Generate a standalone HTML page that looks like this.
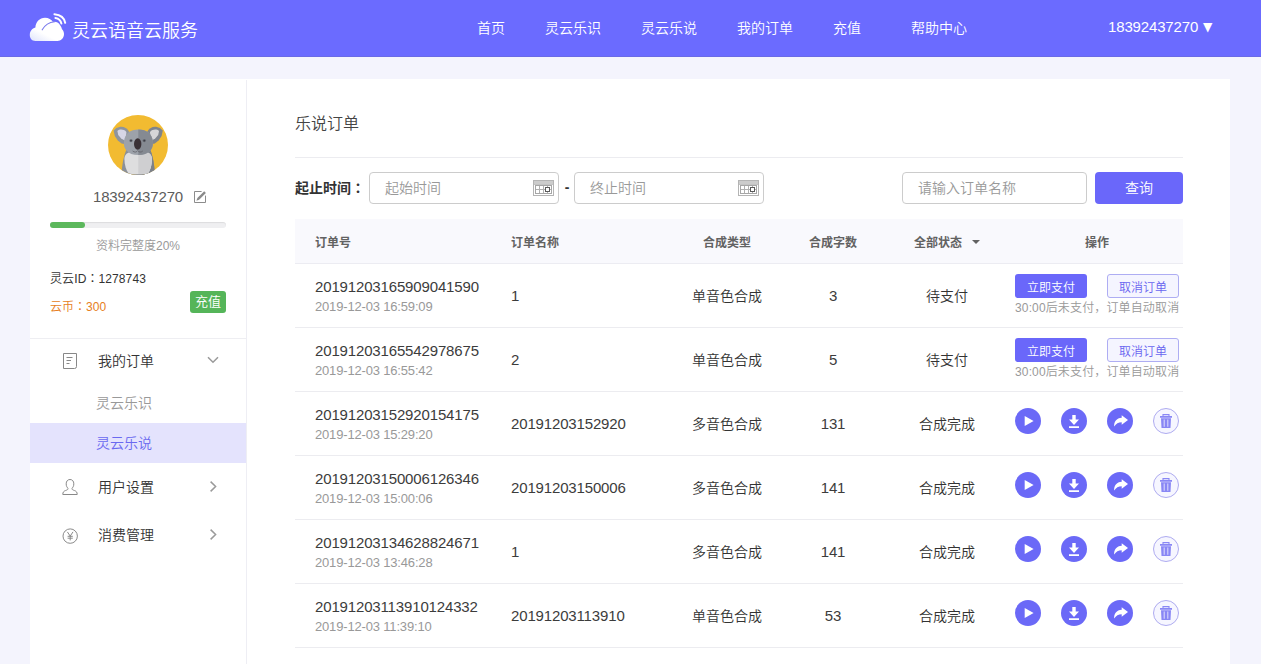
<!DOCTYPE html>
<html lang="zh-CN">
<head>
<meta charset="utf-8">
<title>灵云语音云服务 - 乐说订单</title>
<style>
*{box-sizing:border-box;margin:0;padding:0}
html,body{width:1261px;height:664px;overflow:hidden}
body{background:#f4f4fd;font-family:"Liberation Sans","Noto Sans CJK SC",sans-serif;font-size:14px;color:#333;position:relative;font-weight:350}
ul{list-style:none}
/* header */
.hd{position:absolute;left:0;top:0;width:1261px;height:56px;background:#6b6bff;color:#fff;box-shadow:0 1px 0 #6a6ae6}
.logo{position:absolute;left:29px;top:11px;width:38px;height:32px}
.brand{position:absolute;left:72px;top:18px;font-size:18px;line-height:26px;white-space:nowrap;color:#fff}
.nav a{position:absolute;top:17px;font-size:14px;line-height:22px;color:#fff;white-space:nowrap;text-decoration:none}
.user{position:absolute;left:1108px;top:16px;font-size:15px;line-height:22px;white-space:nowrap;letter-spacing:-.15px}
.user span{position:absolute;left:94px;top:1px;font-family:"DejaVu Sans","Noto Sans CJK SC",sans-serif;font-size:11.5px;line-height:22px;letter-spacing:0;transform:scaleX(.86)}
/* container */
.wrap{position:absolute;left:30px;top:79px;width:1200px;height:601px;background:#fff}
.side{position:absolute;left:0;top:1px;width:217px;height:600px;border-right:1px solid #eeeef4}
.main{position:absolute;left:217px;top:1px;width:983px;height:600px}
/* sidebar */
.avatar{position:absolute;left:78px;top:35px;width:60px;height:60px}
.phone{position:absolute;left:0;top:106px;width:216px;text-align:center;font-size:15px;line-height:22px;color:#5c5c5c;letter-spacing:-.15px;padding-right:23px;padding-left:23px}
.edit{position:absolute;left:163px;top:110px;width:14px;height:14px}
.prog{position:absolute;left:20px;top:142px;width:176px;height:6px;border-radius:3px;background:#efeff1;box-shadow:inset 0 1px 1px rgba(0,0,0,.08)}
.prog b{display:block;width:35px;height:6px;border-radius:3px;background:#5cb85c}
.pct{position:absolute;left:0;top:157px;width:216px;text-align:center;font-size:12px;line-height:18px;color:#999}
.lyid{position:absolute;left:20px;top:189px;letter-spacing:.1px;font-size:12px;line-height:18px;color:#333;white-space:nowrap}
.coin{position:absolute;left:20px;top:217px;font-size:12px;line-height:18px;color:#e67e22;white-space:nowrap}
.charge{position:absolute;left:160px;top:211px;width:36px;height:22px;border-radius:3px;background:#55b559;color:#fff;font-size:13px;line-height:22px;text-align:center}
.sline{position:absolute;left:0;top:258px;width:216px;height:1px;background:#eeeef2}
.menu{position:absolute;left:0;top:259px;width:216px}
.menu .t{position:relative;height:48px;line-height:48px;font-size:14px;color:#333;padding-left:68px}
.menu .t.first{height:44px;line-height:44px}
.menu .t svg.ic{position:absolute;left:31px;top:50%;margin-top:-9px;width:18px;height:18px}
.menu .t svg.ar{position:absolute;left:176px;top:50%;margin-top:-8px;width:14px;height:14px}
.menu .s{height:40px;line-height:40px;font-size:14px;color:#999;padding-left:66px}
.menu .s.on{background:#e4e3fd;color:#6a69f0}
/* main */
.title{position:absolute;left:48px;top:32px;font-size:16px;line-height:24px;color:#444}
.hr{position:absolute;left:48px;top:77px;width:888px;height:1px;background:#ececf0}
.flabel{position:absolute;left:48px;top:96px;font-size:14px;line-height:22px;font-weight:bold;color:#333;white-space:nowrap}
.inp{position:absolute;top:92px;height:32px;border:1px solid #ccc;border-radius:4px;background:#fff;font-size:14px;line-height:30px;color:#999;padding-left:15px;white-space:nowrap}
.inp svg{position:absolute;right:4px;top:7px;width:21px;height:16px}
.dash{position:absolute;left:316px;top:96px;width:8px;text-align:center;font-weight:bold;font-size:14px;line-height:22px;color:#333}
.btn{position:absolute;left:848px;top:92px;width:88px;height:32px;border-radius:4px;background:#6a67fa;color:#fff;font-size:14px;line-height:32px;text-align:center}
/* table */
.th{position:absolute;left:48px;top:139px;width:888px;height:45px;background:#f9f9fd;border-bottom:1px solid #ececf2;font-size:12px;font-weight:bold;color:#626262}
.th span{position:absolute;top:14px;line-height:20px;white-space:nowrap}
.c{transform:translateX(-50%)}
.cl{font-family:"Noto Sans CJK JP","Noto Sans CJK SC",sans-serif}
.row{position:absolute;left:48px;width:888px;height:64px;border-bottom:1px solid #ececf0}
.row span{position:absolute;white-space:nowrap}
.oid{left:20px;top:12px;font-size:15px;line-height:22px;color:#3c3c3c;letter-spacing:-.15px}
.odt{left:20px;top:34px;font-size:13px;line-height:18px;color:#999;letter-spacing:-.17px}
.onm{left:216px;top:21px;font-size:15px;line-height:22px;color:#3c3c3c;letter-spacing:-.15px}
.oty{left:432px;top:21px;font-size:14px;line-height:22px;color:#333}
.ocn{left:538px;top:21px;font-size:15px;line-height:22px;color:#3c3c3c;letter-spacing:-.15px}
.ost{left:652px;top:21px;font-size:14px;line-height:22px;color:#333}
.pay{left:720px;top:10px;width:72px;height:24px;border-radius:3px;background:#6a67fa;color:#fff;font-size:12px;line-height:28px;text-align:center}
.cancel{left:812px;top:10px;width:72px;height:24px;border-radius:3px;background:#f5f5ff;border:1px solid #aeadf3;color:#6864f0;font-size:12px;line-height:26px;text-align:center}
.hint{left:720px;top:35px;font-size:12px;line-height:18px;color:#999;letter-spacing:.14px}
.ico{position:absolute;top:16px;width:26px;height:26px}
</style>
</head>
<body>
<div class="hd">
  <svg class="logo" viewBox="0 0 38 32"><defs><linearGradient id="cg" x1="0" y1="1" x2=".6" y2=".2"><stop offset="0" stop-color="#dfe4fb"/><stop offset=".5" stop-color="#ffffff"/><stop offset="1" stop-color="#ffffff"/></linearGradient></defs>
    <path d="M6.4 30 C2.8 30 .8 27.2 .8 24 C.8 20.4 3 17.6 6.4 16.6 C6.6 11 10.6 6.7 16 6.7 C19.6 6.7 22.4 8.4 24 10.9 C27 10.4 29.4 11.6 31 14 C32 15.4 32.6 16.8 33 18.2 C34.4 19.4 35 21.2 35 23 C35 27 32 30 28.4 30 Z" fill="url(#cg)"/>
    <path d="M13.2 18.8 C15.6 14.6 19.6 11.4 25.6 10.8" fill="none" stroke="#7a7aec" stroke-width="1.1" stroke-linecap="round"/>
    <path d="M26.4 7 C29.6 7.6 31.8 9.6 32.4 12.6" fill="none" stroke="#fff" stroke-width="2" stroke-linecap="round"/>
    <path d="M25.4 3.2 C31.4 3.8 35.4 7.2 36.2 11.8" fill="none" stroke="#fff" stroke-width="2" stroke-linecap="round"/></svg>
  <div class="brand">灵云语音云服务</div>
  <div class="nav">
    <a style="left:477px">首页</a>
    <a style="left:545px">灵云乐识</a>
    <a style="left:641px">灵云乐说</a>
    <a style="left:737px">我的订单</a>
    <a style="left:833px">充值</a>
    <a style="left:911px">帮助中心</a>
  </div>
  <div class="user">18392437270<span>▼</span></div>
</div>

<div class="wrap">
  <div class="side">
    <svg class="avatar" viewBox="0 0 60 60"><defs><clipPath id="kc"><circle cx="30" cy="30" r="30"/></clipPath><clipPath id="kr"><rect x="30.3" y="0" width="30" height="60"/></clipPath></defs>
      <circle cx="30" cy="30" r="30" fill="#f2bb31"/>
      <g clip-path="url(#kc)">
        <path d="M19 33 C15.5 41 13.6 51 13.6 61 H46.8 C46.8 51 45 41 41.6 33 Z" fill="#8b9098"/>
        <path d="M19 33 C15.5 41 13.6 51 13.6 61 H46.8 C46.8 51 45 41 41.6 33 Z" fill="#7c8189" clip-path="url(#kr)"/>
        <path d="M16.4 44 C16.4 38 22 36 30.3 36 C38.6 36 44 38 44 44 C44 50 42.4 55 40 58.6 C37 59.6 23.6 59.6 20.6 58.6 C18.2 55 16.4 50 16.4 44 Z" fill="#dededf"/>
        <path d="M16.4 44 C16.4 38 22 36 30.3 36 C38.6 36 44 38 44 44 C44 50 42.4 55 40 58.6 C37 59.6 23.6 59.6 20.6 58.6 C18.2 55 16.4 50 16.4 44 Z" fill="#cfcfd1" clip-path="url(#kr)"/>
        <path d="M5.6 15.4 L8.4 13 L12.2 11.8 C16 11.4 19.8 13.4 21.2 17 L21.8 24 L18.8 29.6 L13.6 28.6 L9.8 25.6 L6.8 21 Z" fill="#8e949c"/>
        <path d="M54.8 15.4 L52 13 L48.2 11.8 C44.4 11.4 40.6 13.4 39.2 17 L38.6 24 L41.6 29.6 L46.8 28.6 L50.6 25.6 L53.6 21 Z" fill="#7f848c"/>
        <path d="M9.4 16 C11.6 13.8 16 14.2 18.4 17 L17.6 26 L13.2 23.6 L10.2 20 Z" fill="#d6d6e6"/>
        <path d="M51 16 C48.8 13.8 44.4 14.2 42 17 L42.8 26 L47.2 23.6 L50.2 20 Z" fill="#d6d6d8"/>
        <path d="M30.4 14.6 C22 14.6 17 19 16 26 C15 33.6 19.2 40 30.4 40 C41.6 40 45.8 33.6 44.8 26 C43.8 19 38.8 14.6 30.4 14.6 Z" fill="#9da2aa"/>
        <path d="M30.4 14.6 C22 14.6 17 19 16 26 C15 33.6 19.2 40 30.4 40 C41.6 40 45.8 33.6 44.8 26 C43.8 19 38.8 14.6 30.4 14.6 Z" fill="#858a92" clip-path="url(#kr)"/>
        <ellipse cx="29.7" cy="29" rx="3.7" ry="5.8" fill="#3a3136"/>
        <circle cx="23" cy="25.6" r="1.7" fill="#71757d"/><circle cx="23" cy="25.6" r=".9" fill="#3d3d45"/>
        <circle cx="36.3" cy="25.6" r="1.7" fill="#676b73"/><circle cx="36.3" cy="25.6" r=".9" fill="#3d3d45"/>
        <path d="M24.6 36 C26.4 37.6 28.6 37.4 29.7 35.6 C30.8 37.4 33 37.6 34.8 36" fill="none" stroke="#5a5a62" stroke-width=".7"/>
      </g></svg>
    <div class="phone">18392437270</div>
    <svg class="edit" viewBox="0 0 14 14"><path d="M8.6 1.5 H1.5 V12.5 H12.5 V5.6" fill="none" stroke="#8c8c8c" stroke-width="1"/><path d="M3.4 10.7 L4.4 8 L11.2 1.2 L12.9 2.9 L6.1 9.7 Z" fill="#8a8a8a"/></svg>
    <div class="prog"><b></b></div>
    <div class="pct">资料完整度20%</div>
    <div class="lyid">灵云ID<span class="cl" lang="ja">：</span>1278743</div>
    <div class="coin">云币<span class="cl" lang="ja">：</span>300</div>
    <div class="charge">充值</div>
    <div class="sline"></div>
    <ul class="menu">
      <li class="t first"><svg class="ic" viewBox="0 0 18 18"><path d="M2.5 1.5 H15.5 V14.5 Q15.5 16.5 13.5 16.5 H2.5 Z" fill="none" stroke="#888" stroke-width="1"/><path d="M5.5 5.5 H11.5 M5.5 8.5 H10 M5.5 11.5 H8.5" stroke="#888" stroke-width="1"/></svg>我的订单<svg class="ar" viewBox="0 0 14 14"><path d="M2 4.2 L7 9.3 L12 4.2" fill="none" stroke="#9a9a9a" stroke-width="1.5"/></svg></li>
      <li class="s">灵云乐识</li>
      <li class="s on">灵云乐说</li>
      <li class="t"><svg class="ic" viewBox="0 0 18 18"><path d="M9 1.5 C11.4 1.5 12.8 3.3 12.8 5.8 C12.8 8 12 9.6 10.9 10.4 C10.9 11.6 12 12 13.6 12.6 C15.4 13.3 16.2 14.2 16.2 16.5 H1.8 C1.8 14.2 2.6 13.3 4.4 12.6 C6 12 7.1 11.6 7.1 10.4 C6 9.6 5.2 8 5.2 5.8 C5.2 3.3 6.6 1.5 9 1.5 Z" fill="none" stroke="#888" stroke-width="1"/></svg>用户设置<svg class="ar" viewBox="0 0 14 14"><path d="M4.6 2.6 L9.6 7.5 L4.6 12.4" fill="none" stroke="#9a9a9a" stroke-width="1.5"/></svg></li>
      <li class="t"><svg class="ic" viewBox="0 0 18 18"><circle cx="9.2" cy="10.1" r="7.2" fill="none" stroke="#8a8a8a" stroke-width="1"/><path d="M6.4 5.9 L9.2 10.1 L12 5.9 M9.2 10.1 V14.4 M6.6 10.3 H11.8 M6.6 12.2 H11.8" fill="none" stroke="#8a8a8a" stroke-width="1"/></svg>消费管理<svg class="ar" viewBox="0 0 14 14"><path d="M4.6 2.6 L9.6 7.5 L4.6 12.4" fill="none" stroke="#9a9a9a" stroke-width="1.5"/></svg></li>
    </ul>
  </div>
  <div class="main">
    <div class="title">乐说订单</div>
    <div class="hr"></div>
    <div class="flabel">起止时间<span class="cl" lang="ja">：</span></div>
    <div class="inp" style="left:122px;width:190px">起始时间<svg viewBox="0 0 21 16" shape-rendering="crispEdges"><rect x=".5" y=".5" width="20" height="15" fill="#fff" stroke="#b4b4b4"/><rect x="1" y="1" width="19" height="3" fill="#ccc"/><path d="M1 4.5 H20" stroke="#c4c4c4"/><rect x="2.5" y="5.5" width="16" height="8" fill="#fff" stroke="#a6a6a6"/><path d="M6.5 6 V13 M10.5 6 V13 M14.5 6 V13 M3 9.5 H18" stroke="#b0b0b0"/><rect x="12.5" y="7.5" width="4" height="4" fill="#fff" stroke="#5a5a5a"/></svg></div>
    <div class="dash">-</div>
    <div class="inp" style="left:327px;width:190px">终止时间<svg viewBox="0 0 21 16" shape-rendering="crispEdges"><rect x=".5" y=".5" width="20" height="15" fill="#fff" stroke="#b4b4b4"/><rect x="1" y="1" width="19" height="3" fill="#ccc"/><path d="M1 4.5 H20" stroke="#c4c4c4"/><rect x="2.5" y="5.5" width="16" height="8" fill="#fff" stroke="#a6a6a6"/><path d="M6.5 6 V13 M10.5 6 V13 M14.5 6 V13 M3 9.5 H18" stroke="#b0b0b0"/><rect x="12.5" y="7.5" width="4" height="4" fill="#fff" stroke="#5a5a5a"/></svg></div>
    <div class="inp" style="left:655px;width:185px">请输入订单名称</div>
    <div class="btn">查询</div>

    <div class="th">
      <span style="left:20px">订单号</span>
      <span style="left:216px">订单名称</span>
      <span class="c" style="left:432px">合成类型</span>
      <span class="c" style="left:538px">合成字数</span>
      <span class="c" style="left:643px">全部状态</span><i style="position:absolute;left:677px;top:21px;border-left:4px solid transparent;border-right:4px solid transparent;border-top:4px solid #626262"></i>
      <span class="c" style="left:802px">操作</span>
    </div>
    <div class="row" style="top:184px">
      <span class="oid">20191203165909041590</span><span class="odt">2019-12-03 16:59:09</span>
      <span class="onm">1</span><span class="oty c">单音色合成</span><span class="ocn c">3</span><span class="ost c">待支付</span>
      <span class="pay">立即支付</span><span class="cancel">取消订单</span><span class="hint">30:00后未支付，订单自动取消</span>
    </div>
    <div class="row" style="top:248px">
      <span class="oid">20191203165542978675</span><span class="odt">2019-12-03 16:55:42</span>
      <span class="onm">2</span><span class="oty c">单音色合成</span><span class="ocn c">5</span><span class="ost c">待支付</span>
      <span class="pay">立即支付</span><span class="cancel">取消订单</span><span class="hint">30:00后未支付，订单自动取消</span>
    </div>
    <div class="row" style="top:312px">
      <span class="oid">20191203152920154175</span><span class="odt">2019-12-03 15:29:20</span>
      <span class="onm">20191203152920</span><span class="oty c">多音色合成</span><span class="ocn c">131</span><span class="ost c">合成完成</span>
      <svg class="ico" style="left:720px" viewBox="0 0 26 26"><circle cx="13" cy="13" r="13" fill="#6b69f7"/><path d="M9.7 8.1 L18.6 13 L9.7 17.9 Z" fill="#fff"/></svg><svg class="ico" style="left:766px" viewBox="0 0 26 26"><circle cx="13" cy="13" r="13" fill="#6b69f7"/><path d="M11.3 7 h3.4 v4.6 h3.3 L13 17 L8 11.6 h3.3 Z M8 18.3 h10 v1.6 h-10 Z" fill="#fff"/></svg><svg class="ico" style="left:812px" viewBox="0 0 26 26"><circle cx="13" cy="13" r="13" fill="#6b69f7"/><path d="M14.7 7.2 L21 12 L14.7 16.8 V14.2 C11.4 14.2 9 15.6 7.2 18.6 C6.7 13.8 9.6 9.9 14.7 9.7 Z" fill="#fff"/></svg><svg class="ico" style="left:858px" viewBox="0 0 26 26"><circle cx="13" cy="13" r="12.5" fill="#f6f6ff" stroke="#aeabf0" stroke-width="1"/><path d="M7 7.9 h12 v1.9 h-12 Z M8 10.3 h10 l-.5 9.6 h-9 Z" fill="#8987f5"/><path d="M10 8 V6.6 H16 V8" fill="none" stroke="#8987f5" stroke-width="1.1"/><path d="M11.2 11.4 v7.3 M14.8 11.4 v7.3" stroke="#d9d8fc" stroke-width="1.1"/></svg>
    </div>
    <div class="row" style="top:376px">
      <span class="oid">20191203150006126346</span><span class="odt">2019-12-03 15:00:06</span>
      <span class="onm">20191203150006</span><span class="oty c">多音色合成</span><span class="ocn c">141</span><span class="ost c">合成完成</span>
      <svg class="ico" style="left:720px" viewBox="0 0 26 26"><circle cx="13" cy="13" r="13" fill="#6b69f7"/><path d="M9.7 8.1 L18.6 13 L9.7 17.9 Z" fill="#fff"/></svg><svg class="ico" style="left:766px" viewBox="0 0 26 26"><circle cx="13" cy="13" r="13" fill="#6b69f7"/><path d="M11.3 7 h3.4 v4.6 h3.3 L13 17 L8 11.6 h3.3 Z M8 18.3 h10 v1.6 h-10 Z" fill="#fff"/></svg><svg class="ico" style="left:812px" viewBox="0 0 26 26"><circle cx="13" cy="13" r="13" fill="#6b69f7"/><path d="M14.7 7.2 L21 12 L14.7 16.8 V14.2 C11.4 14.2 9 15.6 7.2 18.6 C6.7 13.8 9.6 9.9 14.7 9.7 Z" fill="#fff"/></svg><svg class="ico" style="left:858px" viewBox="0 0 26 26"><circle cx="13" cy="13" r="12.5" fill="#f6f6ff" stroke="#aeabf0" stroke-width="1"/><path d="M7 7.9 h12 v1.9 h-12 Z M8 10.3 h10 l-.5 9.6 h-9 Z" fill="#8987f5"/><path d="M10 8 V6.6 H16 V8" fill="none" stroke="#8987f5" stroke-width="1.1"/><path d="M11.2 11.4 v7.3 M14.8 11.4 v7.3" stroke="#d9d8fc" stroke-width="1.1"/></svg>
    </div>
    <div class="row" style="top:440px">
      <span class="oid">20191203134628824671</span><span class="odt">2019-12-03 13:46:28</span>
      <span class="onm">1</span><span class="oty c">多音色合成</span><span class="ocn c">141</span><span class="ost c">合成完成</span>
      <svg class="ico" style="left:720px" viewBox="0 0 26 26"><circle cx="13" cy="13" r="13" fill="#6b69f7"/><path d="M9.7 8.1 L18.6 13 L9.7 17.9 Z" fill="#fff"/></svg><svg class="ico" style="left:766px" viewBox="0 0 26 26"><circle cx="13" cy="13" r="13" fill="#6b69f7"/><path d="M11.3 7 h3.4 v4.6 h3.3 L13 17 L8 11.6 h3.3 Z M8 18.3 h10 v1.6 h-10 Z" fill="#fff"/></svg><svg class="ico" style="left:812px" viewBox="0 0 26 26"><circle cx="13" cy="13" r="13" fill="#6b69f7"/><path d="M14.7 7.2 L21 12 L14.7 16.8 V14.2 C11.4 14.2 9 15.6 7.2 18.6 C6.7 13.8 9.6 9.9 14.7 9.7 Z" fill="#fff"/></svg><svg class="ico" style="left:858px" viewBox="0 0 26 26"><circle cx="13" cy="13" r="12.5" fill="#f6f6ff" stroke="#aeabf0" stroke-width="1"/><path d="M7 7.9 h12 v1.9 h-12 Z M8 10.3 h10 l-.5 9.6 h-9 Z" fill="#8987f5"/><path d="M10 8 V6.6 H16 V8" fill="none" stroke="#8987f5" stroke-width="1.1"/><path d="M11.2 11.4 v7.3 M14.8 11.4 v7.3" stroke="#d9d8fc" stroke-width="1.1"/></svg>
    </div>
    <div class="row" style="top:504px">
      <span class="oid">20191203113910124332</span><span class="odt">2019-12-03 11:39:10</span>
      <span class="onm">20191203113910</span><span class="oty c">单音色合成</span><span class="ocn c">53</span><span class="ost c">合成完成</span>
      <svg class="ico" style="left:720px" viewBox="0 0 26 26"><circle cx="13" cy="13" r="13" fill="#6b69f7"/><path d="M9.7 8.1 L18.6 13 L9.7 17.9 Z" fill="#fff"/></svg><svg class="ico" style="left:766px" viewBox="0 0 26 26"><circle cx="13" cy="13" r="13" fill="#6b69f7"/><path d="M11.3 7 h3.4 v4.6 h3.3 L13 17 L8 11.6 h3.3 Z M8 18.3 h10 v1.6 h-10 Z" fill="#fff"/></svg><svg class="ico" style="left:812px" viewBox="0 0 26 26"><circle cx="13" cy="13" r="13" fill="#6b69f7"/><path d="M14.7 7.2 L21 12 L14.7 16.8 V14.2 C11.4 14.2 9 15.6 7.2 18.6 C6.7 13.8 9.6 9.9 14.7 9.7 Z" fill="#fff"/></svg><svg class="ico" style="left:858px" viewBox="0 0 26 26"><circle cx="13" cy="13" r="12.5" fill="#f6f6ff" stroke="#aeabf0" stroke-width="1"/><path d="M7 7.9 h12 v1.9 h-12 Z M8 10.3 h10 l-.5 9.6 h-9 Z" fill="#8987f5"/><path d="M10 8 V6.6 H16 V8" fill="none" stroke="#8987f5" stroke-width="1.1"/><path d="M11.2 11.4 v7.3 M14.8 11.4 v7.3" stroke="#d9d8fc" stroke-width="1.1"/></svg>
    </div>
  </div>
</div>
</body>
</html>
